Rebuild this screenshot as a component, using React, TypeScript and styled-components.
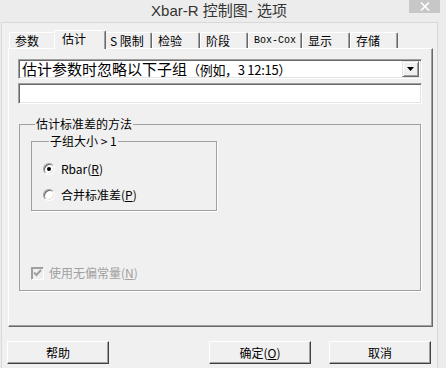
import styled, { createGlobalStyle } from 'styled-components'

const GlobalStyle = createGlobalStyle`
	html, body {
		margin: 0;
		padding: 0;
		background: #ececec;
	}
	body {
		font-family: 'Noto Sans CJK SC', 'Liberation Sans', sans-serif;
		color: #000;
	}
`

const TABS = [
	{ label: '参数', width: 47 },
	{ label: '估计', width: 48, active: true },
	{ label: 'S\u00a0限制', width: 48 },
	{ label: '检验', width: 48 },
	{ label: '阶段', width: 48 },
	{ label: 'Box-Cox', width: 54, mono: true },
	{ label: '显示', width: 48 },
	{ label: '存储', width: 48 },
]

const App = () => {
	return (
		<>
			<GlobalStyle />
			<Window>
				<TitleBar>
					<Title>Xbar-R 控制图- 选项</Title>
					<CloseButton>
						<svg width='10' height='9' viewBox='0 0 10 9'>
							<path d='M1 0.5 L9 8.5 M9 0.5 L1 8.5' stroke='#fff' strokeWidth='1.6' />
						</svg>
					</CloseButton>
				</TitleBar>

				<Client>
					<TabRow>
						{TABS.map((t) => (
							<Tab key={t.label} $width={t.width} $active={!!t.active} $mono={!!t.mono}>
								{t.label}
							</Tab>
						))}
					</TabRow>

					<Panel>
						<Combo>
							<ComboText>
								估计参数时忽略以下子组<ComboHint>（例如，3 12:15）</ComboHint>
							</ComboText>
							<DropButton>
								<svg width='8' height='4' viewBox='0 0 8 4'>
									<path d='M0 0 H7 L3.5 4 Z' fill='#000' />
								</svg>
							</DropButton>
						</Combo>
						<TextInput />

						<Group>
							<Legend>估计标准差的方法</Legend>
							<InnerGroup>
								<InnerLegend>子组大小 &gt; 1</InnerLegend>
								<RadioRow>
									<Radio $checked />
									<OptionText>
										Rbar(<u>R</u>)
									</OptionText>
								</RadioRow>
								<RadioRow>
									<Radio />
									<OptionText>
										合并标准差(<u>P</u>)
									</OptionText>
								</RadioRow>
							</InnerGroup>

							<CheckRow>
								<CheckBox>
									<svg width='9' height='8' viewBox='0 0 9 8'>
										<path d='M1 3.5 L3.5 6 L8 1' stroke='#a0a0a0' strokeWidth='2' fill='none' />
									</svg>
								</CheckBox>
								<DisabledText>
									使用无偏常量(<u>N</u>)
								</DisabledText>
							</CheckRow>
						</Group>
					</Panel>

					<ButtonRow>
						<Button>帮助</Button>
						<Spacer />
						<Button>
							确定(<u>O</u>)
						</Button>
						<Button>取消</Button>
					</ButtonRow>
				</Client>
			</Window>
		</>
	)
}

export default App

const Window = styled.div`
	width: 446px;
	height: 368px;
	overflow: hidden;
	background: #ececec;
`

const TitleBar = styled.div`
	position: relative;
	height: 22px;
	display: flex;
	align-items: center;
	justify-content: center;
`

const Title = styled.div`
	font-family: 'Liberation Sans', 'Noto Sans CJK SC', sans-serif;
	font-size: 15px;
	color: #333;
	margin-left: -8px;
	line-height: 22px;
`

const CloseButton = styled.div`
	position: absolute;
	top: 0;
	left: 409px;
	width: 31px;
	height: 13px;
	background: #c7c7c7;
	display: flex;
	align-items: center;
	justify-content: center;
`

const Client = styled.div`
	margin-left: 1px;
	width: 437px;
	height: 346px;
	border: 1px solid #d9d9d9;
	border-bottom: none;
	background: #f0f0f0;
	padding: 7px 6px 0 6px;
	box-sizing: border-box;
	display: flex;
	flex-direction: column;
`

const TabRow = styled.div`
	display: flex;
	align-items: flex-end;
	height: 18px;
	padding-left: 1px;
	position: relative;
	z-index: 1;
`

const Tab = styled.div<{ $width: number; $active: boolean; $mono: boolean }>`
	box-sizing: border-box;
	width: ${(p) => (p.$active ? p.$width + 4 : p.$width)}px;
	height: ${(p) => (p.$active ? 19 : 16)}px;
	margin: ${(p) => (p.$active ? '0 -2px -1px -2px' : '0')};
	background: #f0f0f0;
	border-top: 1px solid #fff;
	border-left: 1px solid #fff;
	border-right: 1px solid #696969;
	box-shadow: inset -1px 0 0 #a0a0a0;
	border-radius: 2px 2px 0 0;
	padding-left: ${(p) => (p.$active ? 7 : 5)}px;
	padding-top: 1px;
	font-family: ${(p) => (p.$mono ? "'Liberation Mono', monospace" : "'Noto Sans CJK SC', sans-serif")};
	font-size: ${(p) => (p.$mono ? 10 : 12)}px;
	line-height: 13px;
	white-space: nowrap;
	position: relative;
	z-index: ${(p) => (p.$active ? 2 : 1)};
`

const Panel = styled.div`
	box-sizing: border-box;
	width: 425px;
	height: 279px;
	background: #f0f0f0;
	border-top: 1px solid #fff;
	border-left: 1px solid #fff;
	border-right: 1px solid #696969;
	border-bottom: 1px solid #696969;
	box-shadow: inset -1px -1px 0 #a0a0a0;
	padding: 10px 0 0 9px;
	display: flex;
	flex-direction: column;
`

const sunken = `
	box-sizing: border-box;
	background: #fff;
	border-top: 1px solid #a0a0a0;
	border-left: 1px solid #a0a0a0;
	border-right: 1px solid #fff;
	border-bottom: 1px solid #fff;
	box-shadow: inset 1px 1px 0 #696969, inset -1px -1px 0 #e3e3e3;
`

const Combo = styled.div`
	${sunken}
	width: 404px;
	height: 20px;
	display: flex;
	align-items: center;
	justify-content: space-between;
	padding: 0 2px 0 3px;
`

const ComboText = styled.div`
	font-size: 15px;
	line-height: 16px;
	white-space: nowrap;
`

const ComboHint = styled.span`
	font-size: 13px;
	letter-spacing: -0.3px;
`

const DropButton = styled.div`
	box-sizing: border-box;
	width: 17px;
	height: 16px;
	background: #f0f0f0;
	border-top: 1px solid #e3e3e3;
	border-left: 1px solid #e3e3e3;
	border-right: 1px solid #696969;
	border-bottom: 1px solid #696969;
	box-shadow: inset 1px 1px 0 #fff, inset -1px -1px 0 #a0a0a0;
	display: flex;
	align-items: center;
	justify-content: center;
`

const TextInput = styled.div`
	${sunken}
	margin-top: 4px;
	width: 404px;
	height: 21px;
`

const Group = styled.fieldset`
	box-sizing: border-box;
	margin: 13px 0 0 1px;
	width: 402px;
	height: 174px;
	padding: 0 0 0 11px;
	border: 1px solid #a0a0a0;
	box-shadow: 1px 1px 0 #fff;
	display: flex;
	flex-direction: column;
	min-width: 0;
`

const Legend = styled.legend`
	font-size: 12px;
	line-height: 14px;
	padding: 0 1px;
	margin-left: 4px;
`

const InnerGroup = styled.fieldset`
	box-sizing: border-box;
	margin: 3px 0 0 0;
	width: 186px;
	height: 77px;
	padding: 0 0 0 11px;
	border: 1px solid #a0a0a0;
	box-shadow: 1px 1px 0 #fff;
	min-width: 0;
`

const InnerLegend = styled.legend`
	font-size: 12px;
	line-height: 14px;
	padding: 0 1px;
	margin-left: 6px;
`

const RadioRow = styled.div`
	display: flex;
	align-items: center;
	height: 14px;
	margin-top: 14px;
	& + & {
		margin-top: 12px;
	}
`

const Radio = styled.div<{ $checked?: boolean }>`
	box-sizing: border-box;
	width: 12px;
	height: 12px;
	border-radius: 50%;
	background: #fff;
	border: 1px solid;
	border-color: #a0a0a0 #fff #fff #a0a0a0;
	box-shadow: inset 1px 1px 0 #696969, inset -1px -1px 0 #e3e3e3;
	display: flex;
	align-items: center;
	justify-content: center;
	margin-right: 6px;
	&::after {
		content: '';
		display: ${(p) => (p.$checked ? 'block' : 'none')};
		width: 4px;
		height: 4px;
		border-radius: 50%;
		background: #000;
	}
`

const OptionText = styled.div`
	font-size: 12px;
	line-height: 14px;
	white-space: nowrap;
	& u {
		text-underline-offset: 1px;
	}
`

const CheckRow = styled.div`
	display: flex;
	align-items: center;
	margin-top: 55px;
`

const CheckBox = styled.div`
	box-sizing: border-box;
	width: 13px;
	height: 13px;
	background: #f0f0f0;
	border: 1px solid;
	border-color: #a0a0a0 #fff #fff #a0a0a0;
	box-shadow: inset 1px 1px 0 #a0a0a0;
	display: flex;
	align-items: center;
	justify-content: center;
	margin-right: 5px;
`

const DisabledText = styled.div`
	font-size: 12px;
	line-height: 14px;
	color: #a0a0a0;
	white-space: nowrap;
`

const ButtonRow = styled.div`
	display: flex;
	gap: 18px;
	margin-top: 14px;
	margin-left: -1px;
`

const Spacer = styled.div`
	flex: 1;
`

const Button = styled.div`
	box-sizing: border-box;
	width: 102px;
	height: 23px;
	background: #f0f0f0;
	border-top: 1px solid #fff;
	border-left: 1px solid #fff;
	border-right: 1px solid #404040;
	border-bottom: 1px solid #404040;
	box-shadow: inset -1px -1px 0 #a0a0a0;
	display: flex;
	align-items: center;
	justify-content: center;
	font-size: 12px;
	line-height: 14px;
`
